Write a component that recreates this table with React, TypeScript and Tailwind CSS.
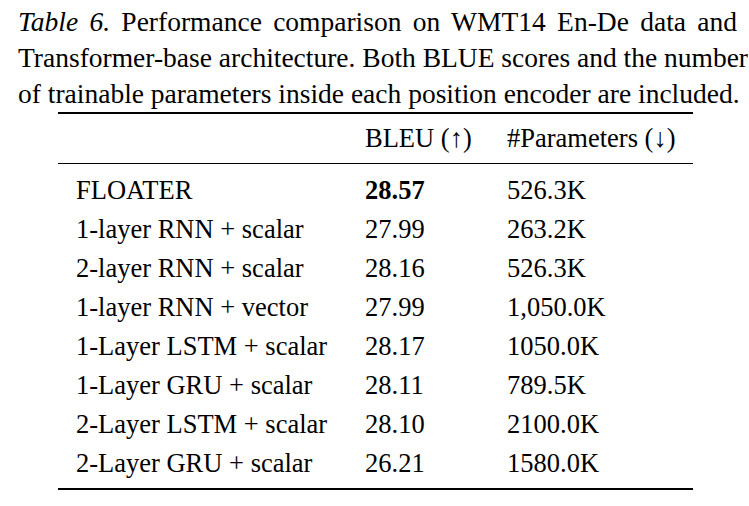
import React from "react";

const rows: [string, string, string, boolean?][] = [
  ["FLOATER", "28.57", "526.3K", true],
  ["1-layer RNN + scalar", "27.99", "263.2K"],
  ["2-layer RNN + scalar", "28.16", "526.3K"],
  ["1-layer RNN + vector", "27.99", "1,050.0K"],
  ["1-Layer LSTM + scalar", "28.17", "1050.0K"],
  ["1-Layer GRU + scalar", "28.11", "789.5K"],
  ["2-Layer LSTM + scalar", "28.10", "2100.0K"],
  ["2-Layer GRU + scalar", "26.21", "1580.0K"],
];

export default function App() {
  return (
    <div
      className="w-[749px] h-[506px] bg-white text-black overflow-hidden"
      style={{ fontFamily: '"Liberation Serif", "Times New Roman", serif' }}
    >
      <div className="pt-[4px] pl-[18px] pr-[12px] text-[27.5px] leading-[36px]">
        <div className="text-justify [text-align-last:justify] whitespace-nowrap">
          <span className="italic">Table 6.</span> Performance comparison on WMT14 En-De data and
        </div>
        <div className="text-justify [text-align-last:justify] whitespace-nowrap">
          Transformer-base architecture. Both BLUE scores and the number
        </div>
        <div className="whitespace-nowrap">
          of trainable parameters inside each position encoder are included.
        </div>
      </div>
      <div className="ml-[58px] w-[635px] border-t-2 border-b-2 border-black text-[26.5px]">
        <div className="grid grid-cols-[289px_142px_1fr] pl-[18px] h-[50px] items-center border-b border-black">
          <div></div>
          <div>BLEU (↑)</div>
          <div>#Parameters (↓)</div>
        </div>
        <div className="pt-[7px] pb-[5px]">
          {rows.map(([a, b, c, bold]) => (
            <div key={a} className="grid grid-cols-[289px_142px_1fr] pl-[18px] h-[39px] items-center">
              <div>{a}</div>
              <div className={bold ? "font-bold" : ""}>{b}</div>
              <div>{c}</div>
            </div>
          ))}
        </div>
      </div>
    </div>
  );
}
